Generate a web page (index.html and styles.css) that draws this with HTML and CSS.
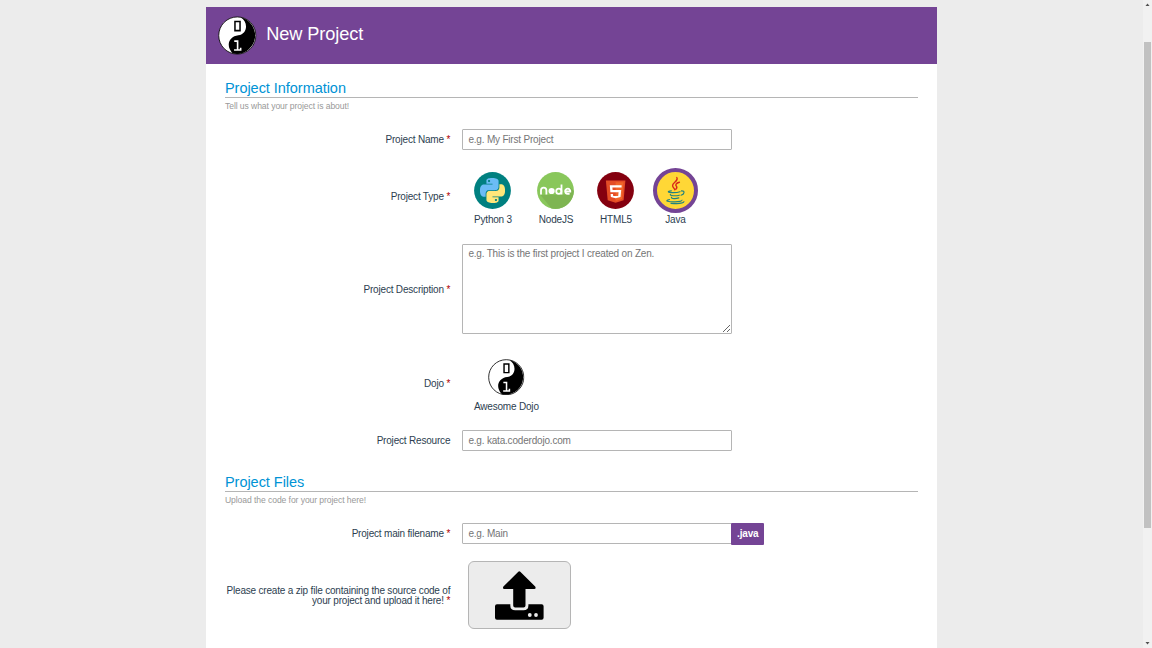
FILE: index.html
```html
<!DOCTYPE html>
<html lang="en">
<head>
<meta charset="utf-8">
<title>New Project</title>
<link rel="stylesheet" href="styles.css">
</head>
<body>
<svg class="defs" width="0" height="0">
  <symbol id="dojo" viewBox="0 0 38 38">
    <circle cx="19" cy="19" r="18.3" fill="#fff"/>
    <path d="M22 1C30 5 29.5 17.5 20 18.8C11 19.8 7 29 14.5 36.8A18.2 18.2 0 1 0 22 1Z"/>
    <circle cx="19" cy="19" r="18.3" fill="none" stroke="#111" stroke-width=".9"/>
    <path d="M16.7 5.3H21.7V14.2H16.7Z" fill="none" stroke="#000" stroke-width="1.5"/>
    <path d="M16 24.5H19.3V33.1M15.8 33.3H22.3V31" fill="none" stroke="#fff" stroke-width="1.6"/>
  </symbol>
  <symbol id="snake" viewBox="0 0 24 24">
    <path d="M14.25.18l.9.2.73.26.59.3.45.32.34.34.25.34.16.33.1.3.04.26.02.2-.01.13V8.5l-.05.63-.13.55-.21.46-.26.38-.3.31-.33.25-.35.19-.35.14-.33.1-.3.07-.26.04-.21.02H8.77l-.69.05-.59.14-.5.22-.41.27-.33.32-.27.35-.2.36-.15.37-.1.35-.07.32-.04.27-.02.21v3.06H3.17l-.21-.03-.28-.07-.32-.12-.35-.18-.36-.26-.36-.36-.35-.46-.32-.59-.28-.73-.21-.88-.14-1.05-.05-1.23.06-1.22.16-1.04.24-.87.32-.71.36-.57.4-.44.42-.33.42-.24.4-.16.36-.1.32-.05.24-.01h.16l.06.01h8.16v-.83H6.18l-.01-2.75-.02-.37.05-.34.11-.31.17-.28.25-.26.31-.23.38-.2.44-.18.51-.15.58-.12.64-.1.71-.06.77-.04.84-.02 1.27.05zm-6.3 1.98l-.23.33-.08.41.08.41.23.34.33.22.41.09.41-.09.33-.22.23-.34.08-.41-.08-.41-.23-.33-.33-.22-.41-.09-.41.09z"/>
  </symbol>
</svg>
<main class="page">
  <header class="banner">
    <svg class="logo"><use href="#dojo"/></svg>
    <h1>New Project</h1>
  </header>
  <form class="form">
    <section class="intro">
      <h2>Project Information</h2>
      <p>Tell us what your project is about!</p>
    </section>
    <div class="row row-name">
      <label>Project Name <b>*</b></label>
      <input class="field" placeholder="e.g. My First Project">
    </div>
    <div class="row row-type">
      <label>Project Type <b>*</b></label>
      <div class="choices">
        <div class="choice python">
          <svg viewBox="0 0 37 37"><circle cx="18.5" cy="18.5" r="18.4" fill="#008080"/>
            <use href="#snake" x="6" y="6" width="25" height="25" fill="#6bbcf5"/>
            <use href="#snake" x="6" y="6" width="25" height="25" fill="#ffe77a" transform="rotate(180 18.5 18.5)"/>
          </svg>
          <span>Python 3</span>
        </div>
        <div class="choice node">
          <svg viewBox="0 0 37 37"><circle cx="18.5" cy="18.5" r="18.4" fill="#89c75b"/>
            <path d="M3.5 23L14.5 36.4A18.4 18.4 0 0 0 36.9 19L33 15.5L30 22.5Z" fill="#7eb552"/>
            <g fill="none" stroke="#fff" stroke-width="1.8">
              <path d="M4 22.6V18.4A2.7 2.7 0 0 1 9.4 18.4V22.6"/>
              <circle cx="21.8" cy="19.2" r="2.6"/>
              <path d="M24.5 12.5V22.5"/>
              <path d="M28.9 19.5H33.3A2.6 2.6 0 1 0 30.6 21.9H32.6"/>
            </g>
            <circle cx="14.6" cy="19" r="3.1" fill="#fff"/>
          </svg>
          <span>NodeJS</span>
        </div>
        <div class="choice html">
          <svg viewBox="0 0 37 37"><circle cx="18.5" cy="18.5" r="18.4" fill="#84000f"/>
            <path d="M8.9 8.5H28.4L26.6 28.3L18.6 30.7L10.7 28.3Z" fill="#e44d26"/>
            <path d="M18.6 10.2H26.5L25 27L18.6 28.9Z" fill="#f16529"/>
            <path d="M24.6 14.4H14.1L14.5 19.1H22.9L22.4 24L18.6 25.1L15 24L14.8 22" fill="none" stroke="#fff" stroke-width="2.4"/>
          </svg>
          <span>HTML5</span>
        </div>
        <div class="choice java">
          <svg viewBox="0 0 45 45"><circle cx="22.5" cy="22.5" r="20.5" fill="#ffd736" stroke="#744495" stroke-width="4"/>
            <g fill="none" stroke="#d9261c" stroke-width="1.4" stroke-linecap="round">
              <path d="M23.8 9.5C26 13 19.2 14.3 19.6 17.8C20 19.6 21.5 20.5 21.8 21.8"/>
              <path d="M26.4 14.3C23 15.2 22 16.8 23.4 18.2C24.2 19.2 23.8 20.3 22.8 21.3"/>
            </g>
            <g fill="none" stroke="#21827f" stroke-width="1.15" stroke-linecap="round">
              <path d="M18.4 22.8C13.5 23.5 14.8 24.7 20 24.6C23 24.6 25.4 24.3 27 23.7"/>
              <path d="M28.5 22.9C32.2 22.6 31.6 26.3 28 27.2"/>
              <path d="M17.4 26.4C16.5 28 22.8 28.1 26.3 27.2"/>
              <path d="M18.5 29.2C18 30.9 23 30.9 25.8 29.9"/>
              <path d="M16.5 31.5C10.2 33 16.5 34 22 33.8C26 33.8 29.2 33.2 29 32.2"/>
              <path d="M18 35.4C24 35.9 30.5 35.4 31 33.7"/>
            </g>
          </svg>
          <span>Java</span>
        </div>
      </div>
    </div>
    <div class="row row-description">
      <label>Project Description <b>*</b></label>
      <textarea class="field" placeholder="e.g. This is the first project I created on Zen."></textarea>
    </div>
    <div class="row row-dojo">
      <label>Dojo <b>*</b></label>
      <div class="dojo">
        <svg><use href="#dojo"/></svg>
        <span>Awesome Dojo</span>
      </div>
    </div>
    <div class="row row-resource">
      <label>Project Resource</label>
      <input class="field" placeholder="e.g. kata.coderdojo.com">
    </div>
    <section class="intro files">
      <h2>Project Files</h2>
      <p>Upload the code for your project here!</p>
    </section>
    <div class="row row-filename">
      <label>Project main filename <b>*</b></label>
      <input class="field" placeholder="e.g. Main"><span class="extension">.java</span>
    </div>
    <div class="row row-upload">
      <label>Please create a zip file containing the source code of your project and upload it here! <b>*</b></label>
      <div class="upload">
        <svg viewBox="0 0 49 49">
          <path d="M23.3 .8Q24.3 -.1 25.3 .8L40.2 15.5Q41.4 18 39.2 18.1H30.5V34.5Q30.5 36.6 28.5 36.6H20.2Q18.2 36.6 18.2 34.5V18.1H9.4Q7.2 18 8.4 15.5Z"/>
          <path d="M2 33.2H15.3V34.5Q15.3 39.3 20.2 39.3H28.5Q33.4 39.3 33.4 34.5V33.2H46.6Q48.6 33.2 48.6 35.2V46.7Q48.6 48.7 46.6 48.7H2Q0 48.7 0 46.7V35.2Q0 33.2 2 33.2Z"/>
          <circle cx="34.8" cy="44" r="1.9" fill="#ececec"/>
          <circle cx="41" cy="44" r="1.9" fill="#ececec"/>
        </svg>
      </div>
    </div>
  </form>
</main>
<aside class="scrollbar">
  <svg viewBox="0 0 9 8"><path d="M2.5 6L4.5 3.5L6.5 6Z"/></svg>
  <div class="thumb"></div>
  <svg viewBox="0 0 9 8"><path d="M2.5 2L4.5 4.5L6.5 2Z"/></svg>
</aside>
</body>
</html>
```
FILE: styles.css
```css
* { box-sizing: border-box; }
body {
  margin: 0;
  height: 648px;
  overflow: hidden;
  display: flex;
  background: #ececec;
  color: #2c3e50;
  font: 10px/10px "Liberation Sans", Arial, sans-serif;
  letter-spacing: -.19px;
}
.defs { position: absolute; }
.page {
  width: 731.5px;
  height: 660px;
  margin: 6.6px 206px 0 205.8px;
  flex: none;
  background: #fff;
}
.banner {
  height: 57px;
  padding-left: 12.4px;
  display: flex;
  align-items: center;
  gap: 9.5px;
  background: #744495;
}
.logo { width: 38.6px; height: 39px; }
h1 {
  margin: 0 0 2px;
  color: #fff;
  font-size: 18.2px;
  line-height: 20px;
  font-weight: 400;
  letter-spacing: -.1px;
}
.form { padding: 16px 19.2px 0; }
.intro { height: 49px; }
.files { margin-top: 23px; }
h2 {
  margin: 0;
  height: 18px;
  border-bottom: 1px solid #b5b5b5;
  color: #0093d5;
  font-size: 14.5px;
  line-height: 17px;
  font-weight: 400;
  letter-spacing: -.04px;
}
.intro p { margin: 3px 0 0; color: #999; font-size: 8.6px; line-height: 11px; letter-spacing: -.085px; }
.row { display: flex; align-items: center; }
.row label { width: 226px; margin-right: 11.7px; margin-left: -.7px; padding-top: 1px; flex: none; text-align: right; }
.row b { color: #b00000; font-weight: 400; letter-spacing: 0; }
.field {
  width: 270px;
  height: 21px;
  margin: 0;
  padding: 0 5.4px;
  border: 1px solid #b5b5b5;
  border-radius: 1px;
  background: #fff;
  font: inherit;
  letter-spacing: inherit;
}
.field::placeholder { color: #757575; opacity: 1; }
.row-name { height: 21px; }
.row-type { height: 58px; margin-top: 17.5px; }
.row-type label { padding-top: 2px; }
.row-description { height: 90px; margin-top: 18.5px; }
.row-description label { padding-top: 3px; }
textarea.field { height: 90px; padding-top: 4.8px; resize: both; }
.row-dojo { height: 60px; margin-top: 19px; }
.row-dojo label { padding-top: 2px; }
.row-resource { height: 21px; margin-top: 17px; }
.row-filename { height: 22px; }
.row-upload { height: 68px; margin-top: 16.5px; }
.choices { height: 58px; display: flex; align-items: flex-end; padding-left: 12px; }
.choice { display: flex; flex-direction: column; align-items: center; }
.choice svg { width: 37px; height: 37px; margin-bottom: 6.2px; }
.choice span { white-space: nowrap; }
.python { width: 38px; }
.node { width: 36px; margin-left: 26px; }
.html { width: 32px; margin-left: 26px; }
.java { width: 45px; margin-left: 21px; }
.java svg { width: 45px; height: 45px; margin-bottom: 2.2px; }
.dojo { height: 60px; padding: 6px 0 0 12px; display: flex; flex-direction: column; align-items: center; }
.dojo svg { width: 36.5px; height: 36.5px; margin-bottom: 6.5px; }
.extension {
  width: 33.5px;
  height: 22px;
  margin-left: -1px;
  border-radius: 1px;
  background: #744495;
  color: #fff;
  font-weight: 700;
  line-height: 21px;
  text-align: center;
}
.upload {
  width: 103.5px;
  height: 68px;
  margin-left: 6px;
  display: flex;
  align-items: center;
  justify-content: center;
  border: 1px solid #b5b5b5;
  border-radius: 6px;
  background: #ececec;
}
.upload svg { width: 49px; height: 49px; }
.scrollbar {
  width: 9px;
  display: flex;
  flex: none;
  flex-direction: column;
  background: #f1f1f1;
}
.scrollbar svg { width: 9px; height: 8px; fill: #505050; }
.thumb { width: 7px; height: 486px; margin: 34px 1px 112px; background: #c1c1c1; }
```
